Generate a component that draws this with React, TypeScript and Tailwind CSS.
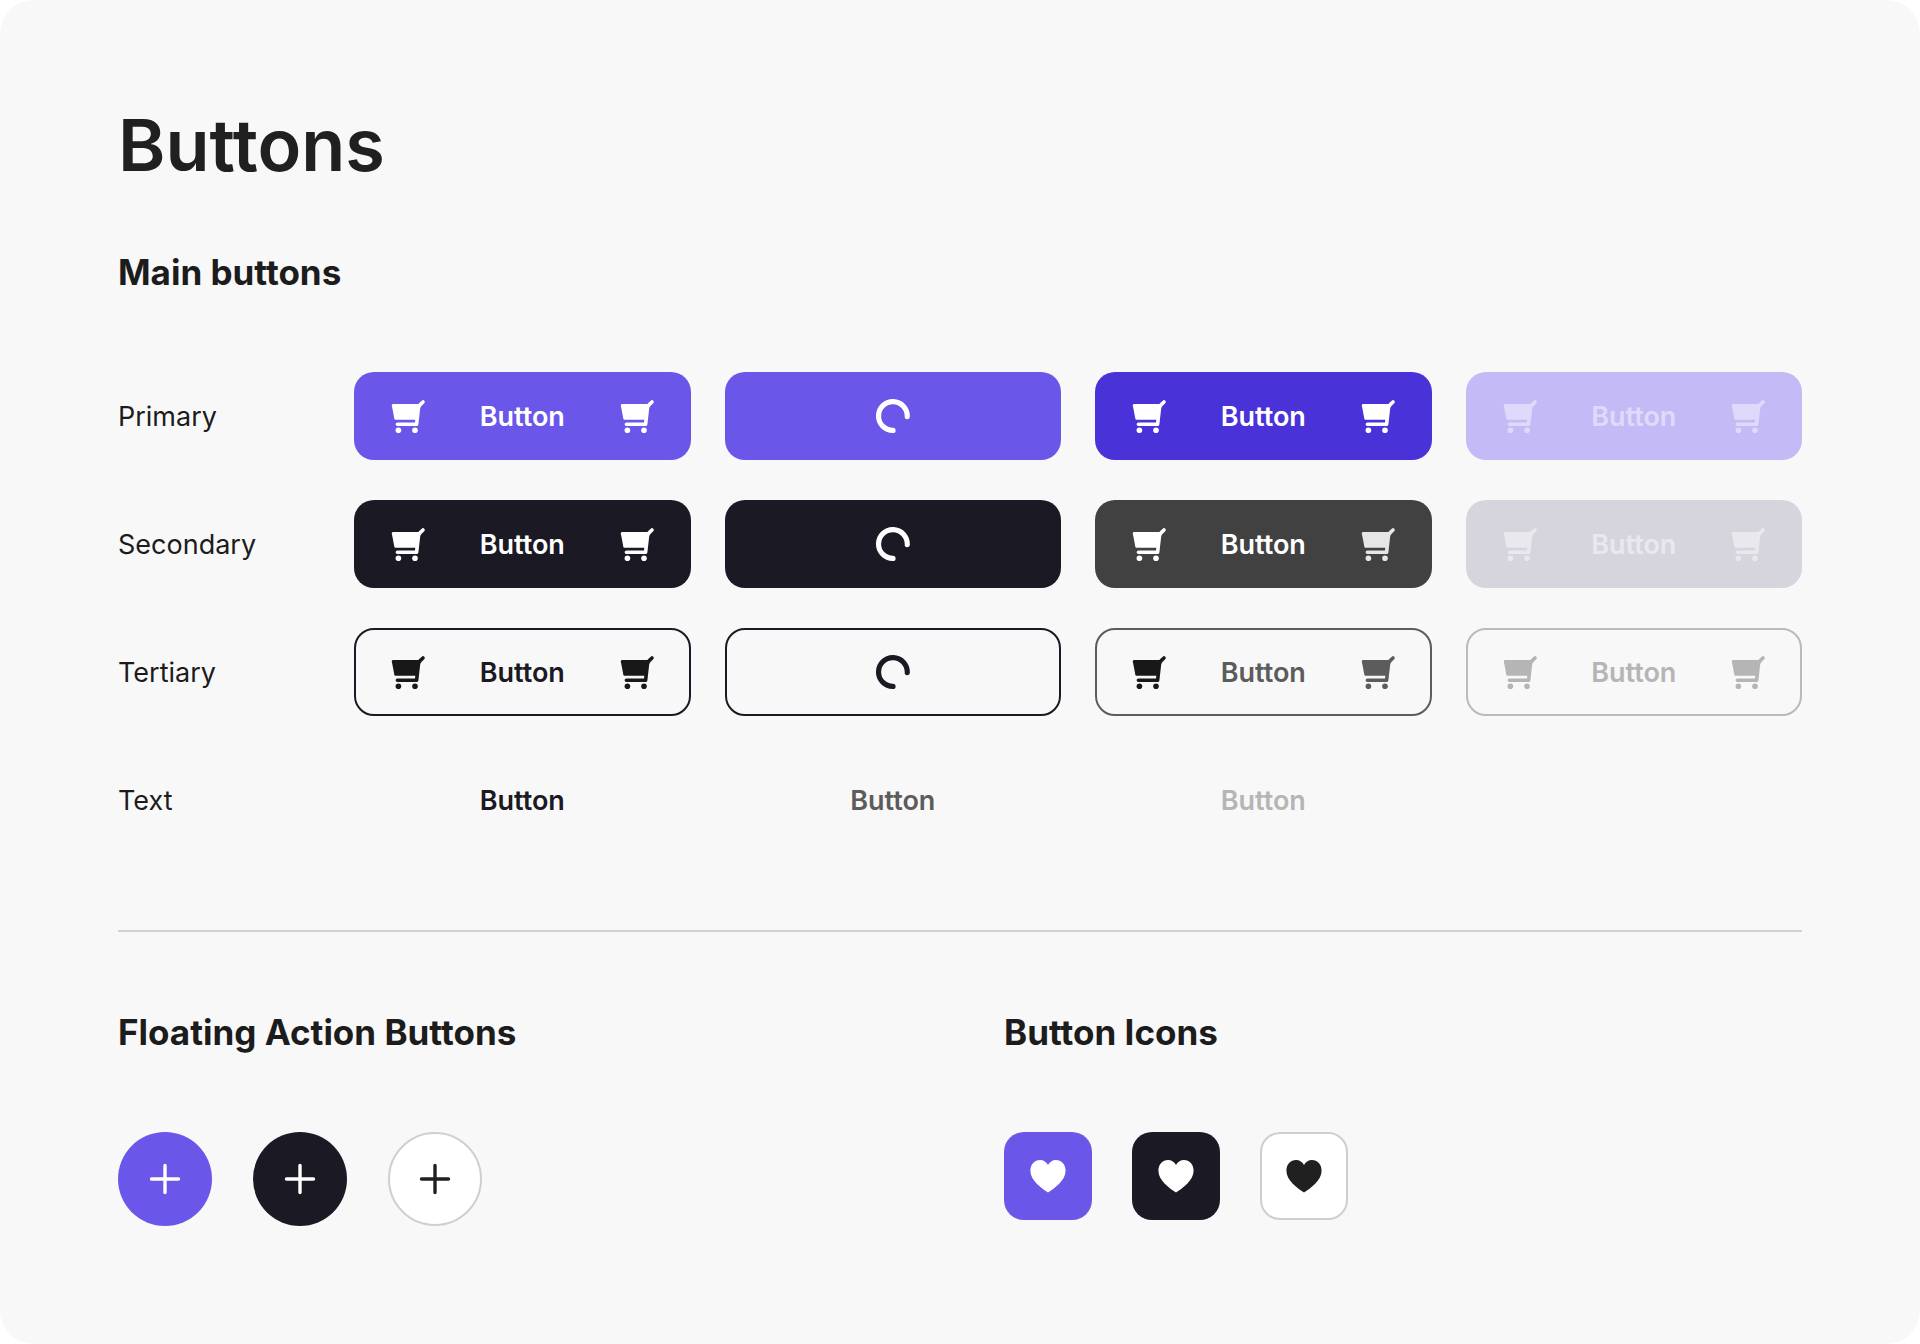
import React from 'react';
import clsx from 'clsx';

type Variant = {
  look: string;
  loading?: boolean;
  disabled?: boolean;
  rightIcon?: string;
};

const rows: { label: string; variants: Variant[] }[] = [
  {
    label: 'Primary',
    variants: [
      { look: 'bg-[#6a57ea] text-white' },
      { look: 'bg-[#6a57ea] text-white', loading: true },
      { look: 'bg-[#4a32d9] text-white' },
      { look: 'bg-[#c4bbf6] text-[#dfdafb]', disabled: true },
    ],
  },
  {
    label: 'Secondary',
    variants: [
      { look: 'bg-[#1b1924] text-white' },
      { look: 'bg-[#1b1924] text-white', loading: true },
      { look: 'bg-[#414141] text-white', rightIcon: 'text-[#e6e6e6]' },
      { look: 'bg-[#d6d4dd] text-[#e9e8ed]', disabled: true },
    ],
  },
  {
    label: 'Tertiary',
    variants: [
      { look: 'border-2 border-[#1b1924] text-[#1b1924]' },
      { look: 'border-2 border-[#1b1924] text-[#1b1924]', loading: true },
      { look: 'border-2 border-[#5c5c5c] text-[#5c5c5c]', rightIcon: 'text-[#5c5c5c]' },
      { look: 'border-2 border-[#bababa] text-[#b5b5b5]', disabled: true },
    ],
  },
];

const textButtons = ['text-[#1b1924]', 'text-[#5c5c5c]', 'text-[#b5b5b5]'];

const tones = [
  { name: 'primary', look: 'bg-[#6a57ea] text-white' },
  { name: 'secondary', look: 'bg-[#1b1924] text-white' },
  { name: 'outline', look: 'border-2 border-[#cfcfcf] bg-white text-[#202020]' },
];

const CartIcon: React.FC<{ className?: string }> = ({ className }) => (
  <svg viewBox="0 0 40 40" className={clsx('size-10 shrink-0', className)} aria-hidden="true">
    <path d="M5 8H31.4L29.6 23.8H7.4Q6.6 23.8 6.4 23L3.8 9.6Q3.6 8 5 8Z" fill="currentColor" />
    <path
      d="M9.4 28.2H28.6L30.4 12.4Q30.7 10 32.2 8.6L35 6"
      fill="none"
      stroke="currentColor"
      strokeWidth="3.6"
      strokeLinecap="round"
      strokeLinejoin="round"
    />
    <circle cx="10.4" cy="34.2" r="2.8" fill="currentColor" />
    <circle cx="27" cy="34.2" r="2.8" fill="currentColor" />
  </svg>
);

const Spinner: React.FC = () => (
  <svg viewBox="0 0 40 40" className="size-10" aria-hidden="true">
    <path
      d="M34.3 20.6A14.4 14.4 0 1 0 20 34.4"
      fill="none"
      stroke="currentColor"
      strokeWidth="5.2"
      strokeLinecap="round"
    />
  </svg>
);

const PlusIcon: React.FC = () => (
  <svg viewBox="0 0 40 40" className="size-10" aria-hidden="true">
    <path d="M20 6.5V33.5M6.5 20H33.5" stroke="currentColor" strokeWidth="3.4" strokeLinecap="round" />
  </svg>
);

const HeartIcon: React.FC = () => (
  <svg viewBox="0 0 40 40" className="size-10" aria-hidden="true">
    <path
      d="M20 36.4C13.5 32.4 2.4 24.6 2.4 14.8C2.4 8.2 6.6 4 12 4C15.6 4 18.6 6 20 9C21.4 6 24.4 4 28 4C33.4 4 37.6 8.2 37.6 14.8C37.6 24.6 26.5 32.4 20 36.4Z"
      fill="currentColor"
    />
  </svg>
);

const MainButton: React.FC<Variant> = ({ look, loading, disabled, rightIcon }) => {
  const outlined = look.includes('border-2');
  return (
    <button
      type="button"
      disabled={disabled}
      aria-label={loading ? 'Loading' : undefined}
      className={clsx(
        'flex h-[88px] items-center rounded-[20px] text-[27px] font-semibold',
        outlined ? 'px-8' : 'px-[34px]',
        loading ? 'justify-center' : 'justify-between',
        look
      )}
    >
      {loading ? (
        <Spinner />
      ) : (
        <>
          <CartIcon className={outlined && !disabled ? 'text-[#181818]' : undefined} />
          <span className="pt-0.5">Button</span>
          <CartIcon className={rightIcon || (outlined && !disabled ? 'text-[#181818]' : undefined)} />
        </>
      )}
    </button>
  );
};

const Heading: React.FC<{ children: React.ReactNode }> = ({ children }) => (
  <h2 className="text-[35px] leading-10 font-bold">{children}</h2>
);

const App: React.FC = () => {
  return (
    <div className="bg-white font-['Inter',sans-serif] text-[#1c1c1c]">
      <main className="min-h-screen rounded-[34px] bg-[#f8f8f8] px-[118px] pt-[100px] pb-[118px]">
        <h1 className="text-[72px] leading-[90px] font-semibold text-[#202020]">Buttons</h1>

        <section className="mt-[62px]">
          <Heading>Main buttons</Heading>
          <div className="mt-20 grid grid-cols-[202px_repeat(4,1fr)] items-center gap-x-[34px] gap-y-10">
            {rows.map((row) => (
              <React.Fragment key={row.label}>
                <span className="pt-0.5 text-[27px]">{row.label}</span>
                {row.variants.map((variant, i) => (
                  <MainButton key={i} {...variant} />
                ))}
              </React.Fragment>
            ))}
            <span className="pt-0.5 text-[27px]">Text</span>
            {textButtons.map((color, i) => (
              <button
                key={color}
                type="button"
                disabled={i === 2}
                className={clsx('h-[88px] pt-0.5 text-[27px] font-semibold', color)}
              >
                Button
              </button>
            ))}
          </div>
        </section>

        <hr className="mt-[86px] border-t-2 border-[#d2d2d2]" />

        <div className="mt-20 grid grid-cols-2 gap-[88px]">
          <section>
            <Heading>Floating Action Buttons</Heading>
            <div className="mt-20 flex gap-[41px]">
              {tones.map((tone) => (
                <button
                  key={tone.name}
                  type="button"
                  aria-label={`Add, ${tone.name}`}
                  className={clsx('flex size-[94px] items-center justify-center rounded-full', tone.look)}
                >
                  <PlusIcon />
                </button>
              ))}
            </div>
          </section>
          <section>
            <Heading>Button Icons</Heading>
            <div className="mt-20 flex gap-10">
              {tones.map((tone) => (
                <button
                  key={tone.name}
                  type="button"
                  aria-label={`Like, ${tone.name}`}
                  className={clsx('flex size-[88px] items-center justify-center rounded-[20px]', tone.look)}
                >
                  <HeartIcon />
                </button>
              ))}
            </div>
          </section>
        </div>
      </main>
    </div>
  );
};

export default App;
